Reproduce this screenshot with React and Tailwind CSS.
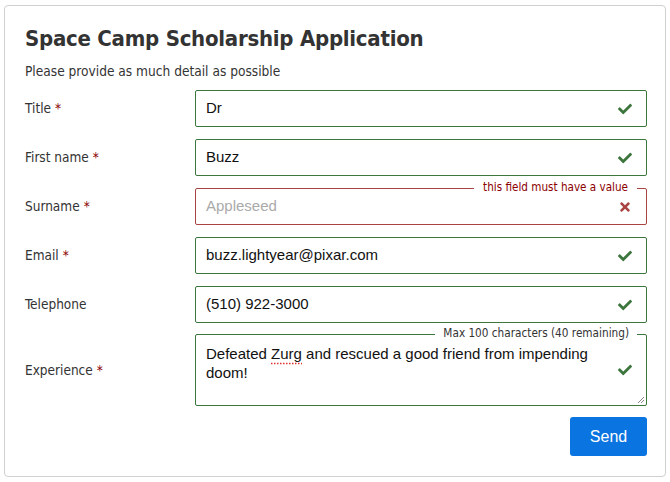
import { FaCheck, FaTimes } from "react-icons/fa";

const fields = [
  { label: "Title", required: true, value: "Dr", ok: true },
  { label: "First name", required: true, value: "Buzz", ok: true },
  { label: "Surname", required: true, placeholder: "Appleseed", ok: false, note: "this field must have a value" },
  { label: "Email", required: true, value: "buzz.lightyear@pixar.com", ok: true },
  { label: "Telephone", required: false, value: "(510) 922-3000", ok: true },
];

const labelFont = { fontFamily: '"DejaVu Sans Condensed", "DejaVu Sans", sans-serif' };

function Label({ text, required }) {
  return (
    <div className="text-[13.5px] text-[#333]" style={labelFont}>
      {text}
      {required ? <span className="ml-[4px] text-[#8b0000]">*</span> : null}
    </div>
  );
}

function Field({ field }) {
  const border = field.ok ? "border-[#3c763d]" : "border-[#a94442]";
  return (
    <div className="relative">
      <div
        className={`flex h-[37px] items-center rounded-[2px] border ${border} bg-white pl-[10px] pr-[14px] font-['Liberation_Sans',sans-serif] text-[15px]`}
      >
        <span className={field.value ? "flex-1 text-[#111]" : "flex-1 text-[#aaa]"}>
          {field.value || field.placeholder}
        </span>
        {field.ok ? (
          <FaCheck className="text-[#3c763d]" size={14} />
        ) : (
          <FaTimes className="text-[#a94442]" size={14} />
        )}
      </div>
      {field.note ? (
        <span
          className="absolute right-[10px] top-[-9px] bg-white px-[9px] text-[11.6px] leading-[16px] text-[#8b0000]"
          style={labelFont}
        >
          {field.note}
        </span>
      ) : null}
    </div>
  );
}

export default function App() {
  return (
    <div className="bg-white pl-[4px] pt-[5px]">
      <div className="h-[472px] w-[662px] rounded-[4px] border border-[#d0d0d0] bg-white pl-[20px] pr-[18px] pt-[19px]">
        <h1 className="text-[22px] font-bold leading-[28px] tracking-[-0.25px] text-[#333]" style={labelFont}>
          Space Camp Scholarship Application
        </h1>
        <p className="mt-[9px] text-[13.6px] leading-[18px] text-[#333]" style={labelFont}>
          Please provide as much detail as possible
        </p>
        <div className="mt-[10px] grid grid-cols-[170px_1fr] items-center gap-y-[12px]">
          {fields.map((f) => (
            <div key={f.label} className="contents">
              <Label text={f.label} required={f.required} />
              <Field field={f} />
            </div>
          ))}
          <Label text="Experience" required />
          <div className="relative -mt-[1px]">
            <div className="relative flex h-[72px] rounded-[2px] border border-[#3c763d] bg-white pl-[10px] pr-[14px] pt-[9px] font-['Liberation_Sans',sans-serif] text-[15px] leading-[19px] text-[#111]">
              <p className="w-[400px]">Defeated Zurg and rescued a good friend from impending doom!</p>
              {/* spell-check squiggle under "Zurg" */}
              <svg className="absolute left-[75px] top-[27px]" width="31" height="3" viewBox="0 0 31 3">
                <line x1="0" y1="1.5" x2="31" y2="1.5" stroke="#e03030" strokeWidth="1.5" strokeDasharray="1.5 1.5" />
              </svg>
              <div className="flex flex-1 items-center justify-end pb-[9px]">
                <FaCheck className="text-[#3c763d]" size={14} />
              </div>
              <svg className="absolute bottom-[1px] right-[1px]" width="9" height="9" viewBox="0 0 9 9">
                <path d="M8 2 L2 8 M8 5 L5 8" stroke="#888" strokeWidth="1" />
              </svg>
            </div>
            <span
              className="absolute right-[10px] top-[-9px] bg-white px-[8px] text-[11.7px] leading-[16px] text-[#333]"
              style={labelFont}
            >
              Max 100 characters (40 remaining)
            </span>
          </div>
        </div>
        <div className="mt-[11px] flex justify-end">
          <button className="h-[39px] w-[77px] rounded-[3px] bg-[#0a74e0] font-['Liberation_Sans',sans-serif] text-[16px] text-white">
            Send
          </button>
        </div>
      </div>
    </div>
  );
}
